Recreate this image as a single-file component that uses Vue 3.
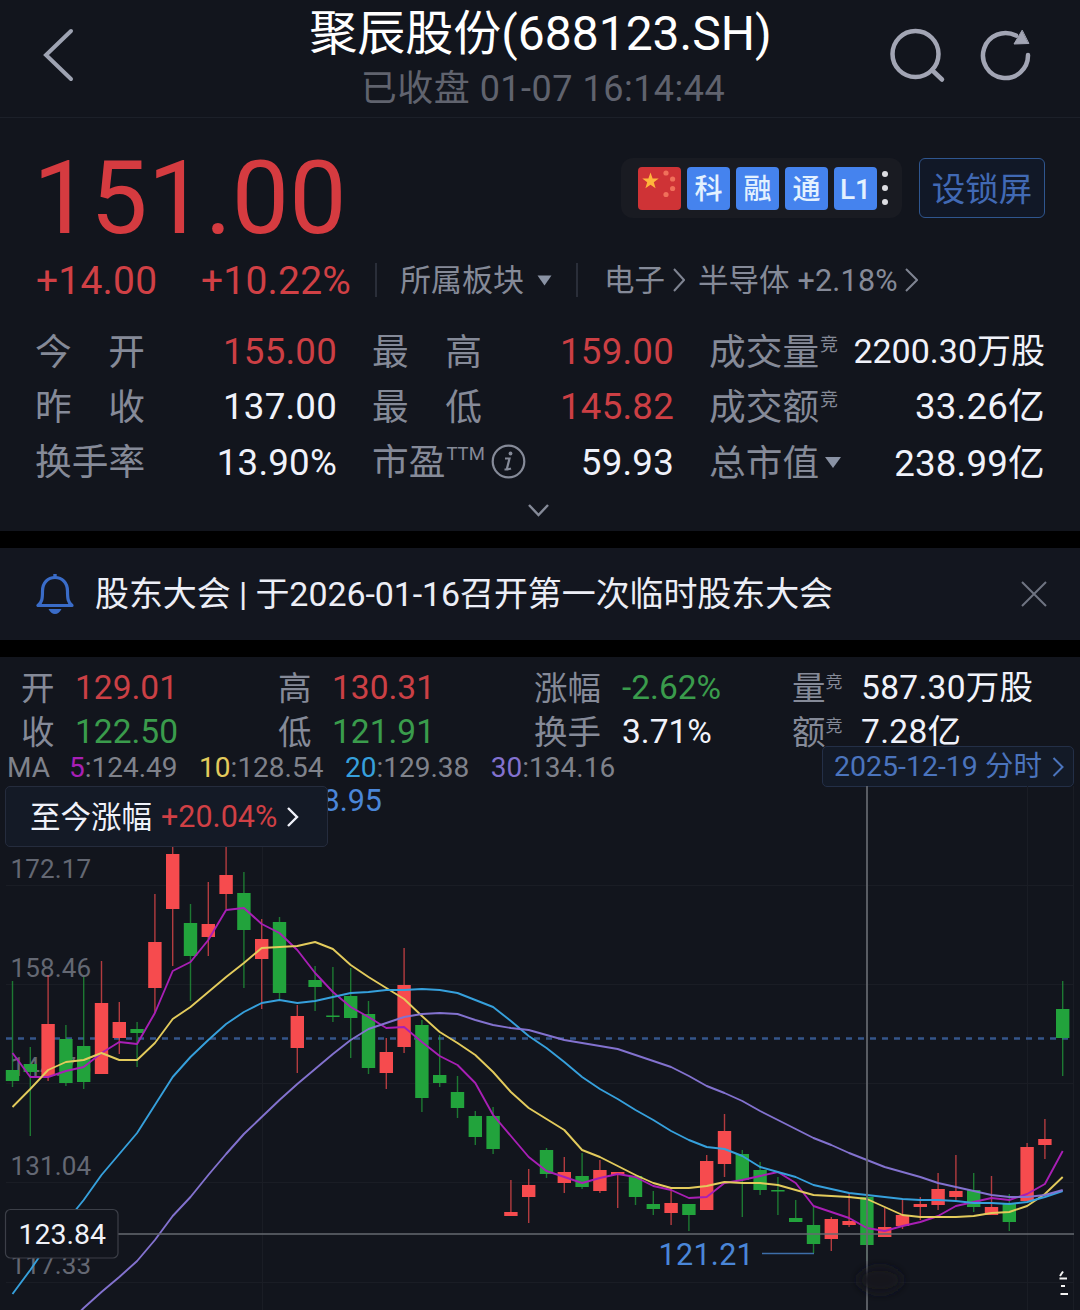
<template>
  <div class="stock">
    <header class="header">
      <svg class="header__back" viewBox="0 0 34 56">
        <path d="M30 4 L5 28 L30 52" />
      </svg>
      <div class="header__center">
        <h1 class="header__title">聚辰股份(688123.SH)</h1>
        <div class="header__status">已收盘 01-07 16:14:44</div>
      </div>
      <div class="header__actions">
        <svg width="56" height="56" viewBox="0 0 56 56">
          <circle cx="25.5" cy="26" r="23" />
          <path d="M42 42 L52 51.500" />
        </svg>
        <svg width="54" height="56" viewBox="0 0 54 56">
          <path d="M48 27 A22.5 22.5 0 1 1 36 7.600" />
          <path class="header__arrow" d="M42 2.500 L34 16 L48.500 15.500 Z" />
        </svg>
      </div>
    </header>

    <section class="quote">
      <div class="quote__top">
        <div class="quote__price">151.00</div>
        <div class="tags">
          <svg class="tags__flag" viewBox="0 0 43 43">
            <rect width="43" height="43" rx="4" fill="#cf3336" />
            <path d="M12.500 5.500 L14.600 11.400 L20.700 11.600 L15.800 15.300 L17.600 21.300 L12.500 17.700 L7.400 21.300 L9.200 15.300 L4.300 11.600 L10.400 11.400 Z" fill="#ffb53c" />
            <circle cx="28" cy="6" r="2.600" fill="#f0705a" />
            <circle cx="34.600" cy="12" r="2.600" fill="#f0705a" />
            <circle cx="34.600" cy="21.500" r="2.600" fill="#f0705a" />
            <circle cx="28" cy="27.500" r="2.600" fill="#f0705a" />
          </svg>
          <span v-for="tag in tags" :key="tag" class="tags__item">{{ tag }}</span>
          <span class="tags__more"><i></i><i></i><i></i></span>
        </div>
        <button class="lock-button" type="button">设锁屏</button>
      </div>

      <div class="quote__change">
        <span class="quote__diff red">+14.00</span>
        <span class="quote__percent red">+10.22%</span>
        <span class="divider"></span>
        <span class="quote__sector">所属板块</span>
        <svg class="triangle" width="15" height="11" viewBox="0 0 15 11"><path d="M0.500 0.500 H14.500 L7.500 10.500 Z" /></svg>
        <span class="divider divider--second"></span>
        <span>电子</span>
        <svg class="chevron chevron--first" width="12" height="24" viewBox="0 0 12 24"><path d="M1 1 L11 12 L1 23" /></svg>
        <span>半导体</span>
        <span class="quote__sector-change">+2.18%</span>
        <svg class="chevron chevron--last" width="13" height="24" viewBox="0 0 13 24"><path d="M1 1 L12 12 L1 23" /></svg>
      </div>

      <div class="metrics">
        <div v-for="item in metrics" :key="item.label" :class="['metrics__cell', { 'metrics__cell--low': item.menu }]">
          <span class="metrics__label">
            <span :class="['metrics__name', { spread: item.spread }]">
              <span v-for="(char, i) in item.label" :key="i">{{ char }}</span>
            </span>
            <sup v-if="item.sup" :class="{ ttm: item.sup === 'TTM' }">{{ item.sup }}</sup>
            <svg v-if="item.info" class="info" width="35" height="35" viewBox="0 0 35 35">
              <circle cx="17.500" cy="17.500" r="15.800" />
              <path d="M14 14.500 H18.500 L16 24.500 Q16 26 20 24.500 M13.500 25.500 H17" />
              <circle class="info__dot" cx="19.500" cy="9.500" r="1.900" />
            </svg>
            <svg v-if="item.menu" class="triangle metrics__menu" width="18" height="13" viewBox="0 0 18 13"><path d="M1 1 H17 L9 12 Z" /></svg>
          </span>
          <span :class="['metrics__value', item.tone, { narrow: item.narrow }]">{{ item.value }}</span>
        </div>
      </div>

      <svg class="quote__expand" width="23" height="14" viewBox="0 0 23 14"><path d="M2 2 L11.500 12 L21 2" /></svg>
    </section>

    <section class="notice">
      <svg class="notice__bell" width="38" height="42" viewBox="0 0 38 42">
        <path d="M2 32.500 H36 C32 29 31.500 26 31.500 18 C31.500 9.500 26 4.500 19 4.500 C12 4.500 6.500 9.500 6.500 18 C6.500 26 6 29 2 32.500 Z" />
        <path class="notice__solid" d="M17.300 1 H20.700 V5 H17.300 Z M12.500 36 H25.500 Q23 41 19 41 Q15 41 12.500 36 Z" />
      </svg>
      <span class="notice__text">股东大会 | 于2026-01-16召开第一次临时股东大会</span>
      <svg class="notice__close" width="26" height="28" viewBox="0 0 26 28"><path d="M1 2 L25 26 M25 2 L1 26" /></svg>
    </section>

    <section class="kline">
      <div class="kline__stats">
        <div v-for="item in dayStats" :key="item.label" class="kline__stat">
          <span :class="['kline__label', { wide: item.label.length > 1 }]">{{ item.label }}<sup v-if="item.sup">{{ item.sup }}</sup></span>
          <span :class="['kline__value', item.tone]">{{ item.value }}</span>
        </div>
      </div>

      <div class="ma">
        <span class="ma__name">MA</span>
        <span v-for="line in lines" :key="line.period" class="ma__item"><b :style="{ color: line.color }">{{ line.period }}</b>:{{ line.value }}</span>
        <div class="ma__date">
          <span>2025-12-19 分时</span>
          <svg width="12" height="20" viewBox="0 0 12 20"><path d="M1.500 1 L10.500 10 L1.500 19" /></svg>
        </div>
      </div>

      <div class="chart">
        <svg class="chart__svg" width="1080" height="524" viewBox="0 786 1080 524">
          <defs>
            <filter id="soften" x="-50%" y="-100%" width="200%" height="300%">
              <feGaussianBlur stdDeviation="5" />
            </filter>
          </defs>

          <g class="grid">
            <line v-for="y in gridRows" :key="y" x1="6" :y1="y" x2="1073" :y2="y" />
            <line v-for="x in [262.5, 1027.5, 1073.5]" :key="x" :x1="x" y1="786" :x2="x" y2="1310" />
          </g>

          <g class="axis">
            <text v-for="label in axis" :key="label.text" x="10.500" :y="label.y">{{ label.text }}</text>
          </g>

          <line class="last-price" x1="6" y1="1038.500" x2="1073" y2="1038.500" />

          <text class="mark" x="382" y="811" text-anchor="end">178.95</text>
          <text class="mark mark--low" x="658.500" y="1265">121.21</text>
          <path class="mark-line" d="M762 1253.500 H814" />

          <g v-for="(c, i) in candles" :key="i" :class="c[0] === 'r' ? 'candle-up' : 'candle-down'">
            <rect class="candle__wick" :x="candleX(i) - 0.7" :y="c[1]" width="1.4" :height="c[4] - c[1]" />
            <rect :x="candleX(i) - 6.7" :y="c[2]" width="13.4" :height="c[3] - c[2]" />
          </g>

          <polyline
            v-for="line in lines"
            :key="line.period"
            class="ma-line"
            :points="toPoints(line)"
            :stroke="line.color"
          />

          <path class="cross" d="M867 786 V1310 M118 1234 H1074" />

          <rect x="5.500" y="1209.500" width="112.500" height="48.500" rx="5" class="cross-label" />
          <text x="18.500" y="1244" class="cross-text">123.84</text>

          <ellipse class="smudge" cx="880" cy="1280" rx="22" ry="13" filter="url(#soften)" />
          <path class="edge-mark" d="M1060 1276 L1063 1271.500 M1059.500 1278.500 H1067 M1061 1286 H1065 M1060.500 1294 H1068" />
        </svg>

        <div class="chart__tip">
          <span class="chart__tip-name">至今涨幅</span>
          <span class="red chart__tip-value">+20.04%</span>
          <svg width="13" height="20" viewBox="0 0 13 20"><path d="M2 1 L11 10 L2 19" /></svg>
        </div>
      </div>
    </section>
  </div>
</template>

<script setup>
const tags = ['科', '融', '通', 'L1'];

const metrics = [
  { label: '今开', value: '155.00', tone: 'red', spread: true },
  { label: '最高', value: '159.00', tone: 'red', spread: true },
  { label: '成交量', value: '2200.30万股', sup: '竞', narrow: true },
  { label: '昨收', value: '137.00', spread: true },
  { label: '最低', value: '145.82', tone: 'red', spread: true },
  { label: '成交额', value: '33.26亿', sup: '竞' },
  { label: '换手率', value: '13.90%' },
  { label: '市盈', value: '59.93', sup: 'TTM', info: true },
  { label: '总市值', value: '238.99亿', menu: true },
];

const dayStats = [
  { label: '开', value: '129.01', tone: 'red' },
  { label: '高', value: '130.31', tone: 'red' },
  { label: '涨幅', value: '-2.62%', tone: 'green' },
  { label: '量', value: '587.30万股', sup: '竞' },
  { label: '收', value: '122.50', tone: 'green' },
  { label: '低', value: '121.91', tone: 'green' },
  { label: '换手', value: '3.71%' },
  { label: '额', value: '7.28亿', sup: '竞' },
];

const gridRows = [885.5, 984.5, 1083.5, 1182.5, 1282.5];

const axis = [
  { text: '172.17', y: 878 },
  { text: '158.46', y: 977 },
  { text: '144.75', y: 1076 },
  { text: '131.04', y: 1175 },
  { text: '117.33', y: 1274 },
];

// [direction, high, body top, body bottom, low] in chart coordinates
const candles = [
  ['g', 981, 1070, 1081, 1087], ['g', 1047, 1064, 1072, 1136], ['r', 975, 1024, 1076, 1081],
  ['g', 1025, 1039, 1083, 1086], ['g', 977, 1046, 1082, 1089], ['r', 961, 1003, 1074, 1074],
  ['r', 1002, 1022, 1038, 1054], ['g', 1022, 1029, 1033, 1067], ['r', 894, 942, 988, 1013],
  ['r', 840, 854, 909, 966], ['g', 904, 923, 956, 1001], ['r', 882, 924, 937, 956],
  ['r', 835, 875, 894, 909], ['g', 872, 893, 930, 988], ['r', 919, 939, 959, 1009],
  ['g', 917, 922, 993, 999], ['r', 1005, 1016, 1048, 1073], ['g', 966, 980, 987, 1011],
  ['g', 967, 1015.5, 1017, 1022], ['g', 968, 996, 1018, 1058], ['g', 1001, 1014, 1068, 1074],
  ['r', 1038, 1052, 1073, 1089], ['r', 948, 985, 1047, 1053], ['g', 1020, 1025, 1098, 1112],
  ['g', 1035, 1075, 1083, 1087], ['g', 1076, 1092, 1108, 1118], ['g', 1111, 1116, 1137, 1145],
  ['g', 1107, 1116, 1149, 1154], ['r', 1180, 1212, 1216, 1216], ['r', 1169, 1185, 1197, 1223],
  ['g', 1148, 1150, 1174, 1178], ['r', 1157, 1172, 1183, 1193], ['g', 1153, 1176, 1187, 1189],
  ['r', 1160, 1170, 1191, 1193], ['r', 1172, 1172, 1175, 1208], ['g', 1174, 1176, 1197, 1205],
  ['g', 1191, 1204, 1209, 1215], ['r', 1188, 1203, 1213, 1225], ['g', 1204, 1204, 1215, 1231],
  ['r', 1155, 1161, 1210, 1210], ['r', 1114, 1131, 1164, 1177], ['g', 1150, 1154, 1180, 1217],
  ['g', 1162, 1170, 1190, 1195], ['g', 1177, 1190, 1191.5, 1215], ['g', 1200, 1218, 1222, 1222],
  ['g', 1207, 1225, 1244, 1253], ['r', 1217, 1219, 1239, 1251], ['r', 1194, 1221, 1225, 1227],
  ['g', 1193, 1197, 1245, 1261], ['r', 1208, 1227, 1237, 1237], ['r', 1199, 1215, 1226, 1229],
  ['r', 1197, 1204, 1207, 1220], ['r', 1173, 1189, 1205, 1210], ['r', 1155, 1191, 1197, 1200],
  ['g', 1173, 1190, 1207, 1212], ['r', 1176, 1207, 1215, 1215], ['g', 1194, 1203, 1222, 1231],
  ['r', 1143, 1147, 1201, 1201], ['r', 1119, 1139, 1145, 1159], ['g', 981, 1009, 1038, 1076],
];

const lines = [
  {
    period: 5,
    value: '124.49',
    color: '#a81fb5',
    ys: [
      1053, 1077, 1077, 1071, 1067, 1053, 1042, 1044, 1013, 971, 962, 940, 910, 908, 924,
      933, 950, 973, 992, 1007, 1017, 1028, 1027, 1042, 1056, 1065, 1083, 1115, 1136, 1157,
      1171, 1177, 1183, 1178, 1174, 1177, 1186, 1190, 1198, 1197, 1183, 1180, 1176, 1172, 1183,
      1206, 1212, 1218, 1228, 1231, 1226, 1222, 1216, 1206, 1202, 1198, 1200, 1194, 1184, 1151,
    ],
  },
  {
    period: 10,
    value: '128.54',
    color: '#e3cb5c',
    ys: [
      1107, 1089, 1070, 1062, 1060, 1053, 1060, 1060, 1043, 1019, 1007, 992, 977, 963, 948,
      947, 946, 942, 949, 965, 977, 988, 999, 1016, 1032, 1043, 1055, 1072, 1092, 1108,
      1119, 1130, 1150, 1157, 1166, 1175, 1183, 1188, 1188, 1186, 1182, 1183, 1183, 1185, 1190,
      1195, 1196, 1197, 1199, 1207, 1215, 1217, 1217, 1217, 1216, 1213, 1212, 1206, 1194, 1177,
    ],
  },
  {
    period: 20,
    value: '129.38',
    color: '#36a0dc',
    ys: [
      1294, 1270, 1244, 1222, 1200, 1175, 1154, 1133, 1105, 1077, 1057, 1040, 1024, 1012, 1003,
      1000, 1003, 1001, 997, 993, 992, 990, 990, 989, 990, 993, 1000, 1007, 1021, 1036,
      1048, 1062, 1077, 1089, 1099, 1110, 1120, 1131, 1140, 1147, 1149, 1156, 1167, 1172, 1177,
      1185, 1189, 1193, 1195, 1197, 1199, 1200, 1200, 1201, 1203, 1203, 1204, 1202, 1197, 1191,
    ],
  },
  {
    period: 30,
    value: '134.16',
    color: '#8372cf',
    ys: [
      1380, 1362, 1344, 1326, 1308, 1292, 1277, 1261, 1240, 1216, 1197, 1175, 1154, 1134, 1117,
      1100, 1084, 1069, 1054, 1040, 1029, 1023, 1017, 1014, 1013, 1014, 1020, 1025, 1028, 1030,
      1035, 1040, 1043, 1046, 1049, 1055, 1061, 1067, 1076, 1086, 1093, 1101, 1111, 1120, 1129,
      1138, 1145, 1153, 1160, 1167, 1172, 1177, 1183, 1187, 1191, 1195, 1197, 1197, 1195, 1190,
    ],
  },
];

const candleX = (i) => 12.5 + i * 17.8;

const toPoints = (line) => line.ys.map((y, i) => `${candleX(i).toFixed(1)},${y}`).join(' ');
</script>

<style>
body {
  background: #000;
}
</style>

<style scoped>
.stock {
  width: 1080px;
  height: 1310px;
  overflow: hidden;
  background: #000;
  color: #858a98;
  font-family: Roboto, 'Noto Sans CJK SC', sans-serif;
  font-weight: 400;
}

svg {
  display: block;
  flex: none;
  fill: none;
}

.red {
  color: #d04045;
}

.green {
  color: #3a9c4c;
}

/* Header */
.header {
  display: grid;
  grid-template-columns: 270px 1fr 270px;
  height: 118px;
  box-sizing: border-box;
  border-bottom: 1px solid #1c2029;
  background: #12151d;
}

.header__back {
  width: 34px;
  height: 56px;
  margin: 27px 0 0 41px;
  stroke: #9ea3b2;
  stroke-width: 4;
  stroke-linecap: round;
}

.header__center {
  text-align: center;
  white-space: nowrap;
}

.header__title {
  margin: 6px 0 0 1px;
  font-size: 48px;
  line-height: 56px;
  font-weight: 400;
  color: #fff;
}

.header__status {
  margin: 6px 0 0 6px;
  font-size: 36px;
  line-height: 42px;
  letter-spacing: 0.5px;
  color: #60636e;
}

.header__actions {
  display: flex;
  gap: 35px;
  padding: 28px 0 0 80px;
  stroke: #a2a5b4;
  stroke-width: 4.5;
  stroke-linecap: round;
}

.header__actions svg:last-child {
  margin-left: -1px;
}

.header__arrow {
  fill: #a2a5b4;
  stroke-width: 1;
}

/* Quote */
.quote {
  height: 413px;
  box-sizing: border-box;
  padding: 40px 35px 0 36px;
  background: #12151d;
}

.quote__top {
  display: flex;
  align-items: flex-start;
  height: 78px;
}

.quote__price {
  width: 588px;
  margin-left: -3px;
  padding-top: 1px;
  box-sizing: border-box;
  font-size: 102px;
  line-height: 78px;
  color: #d53b40;
}

.tags {
  display: flex;
  align-items: center;
  gap: 6px;
  width: 281px;
  height: 60px;
  box-sizing: border-box;
  padding: 0 10px 0 17px;
  border-radius: 12px;
  background: #191b22;
}

.tags__flag {
  width: 43px;
  height: 43px;
}

.tags__item {
  width: 43px;
  height: 43px;
  border-radius: 4px;
  background: #4583ee;
  color: #e3f1ff;
  font-size: 28px;
  line-height: 45px;
  font-weight: 500;
  text-align: center;
}

.tags__more {
  display: flex;
  flex-direction: column;
  gap: 8px;
  margin-left: -1px;
}

.tags__more i {
  width: 6px;
  height: 6px;
  border-radius: 50%;
  background: #dcdde2;
}

.lock-button {
  width: 126px;
  height: 60px;
  margin-left: 17px;
  padding: 3px 0 0;
  border: 1.5px solid #2f568f;
  border-radius: 6px;
  background: #111827;
  color: #4169b4;
  font-family: inherit;
  font-size: 33.5px;
  line-height: 54px;
}

.quote__change {
  display: flex;
  align-items: center;
  height: 44px;
  margin-top: 22px;
  font-size: 30.5px;
  line-height: 44px;
  white-space: nowrap;
}

.quote__change span:not(.divider) {
  padding-top: 2px;
}

.quote__diff,
.quote__percent {
  width: 165px;
  font-size: 39px;
  letter-spacing: 0.2px;
}

.quote__percent {
  width: 174px;
}

.divider {
  width: 2px;
  height: 34px;
  margin-right: 23px;
  background: #2a2e39;
}

.divider--second {
  margin: 0 26px 0 24px;
}

.quote__sector {
  width: 137px;
  font-size: 31px;
}

.triangle {
  fill: #8a93a5;
}

.chevron {
  stroke: #7f8492;
  stroke-width: 2;
}

.chevron--first {
  margin: 0 13px 0 8px;
}

.chevron--last {
  margin-left: 7px;
}

.quote__sector-change {
  margin-left: 8px;
  letter-spacing: 0.2px;
}

.metrics {
  display: grid;
  grid-template-columns: 301px 301px 335px;
  grid-auto-rows: 55.300px;
  column-gap: 36px;
  margin-top: 21px;
}

.metrics__cell {
  display: flex;
  justify-content: space-between;
  align-items: center;
  font-size: 36.700px;
  line-height: 55px;
  white-space: nowrap;
}

.metrics__cell--low {
  padding-top: 2px;
}

.metrics__label {
  display: flex;
  align-items: center;
  margin-left: -1px;
}

.metrics__name {
  padding-top: 3px;
}

.spread {
  display: flex;
  justify-content: space-between;
  width: 110px;
}

.metrics__label sup {
  align-self: flex-start;
  margin: 13px 0 0 1px;
  font-size: 18px;
  line-height: 20px;
}

.metrics__label sup.ttm {
  margin-top: 12px;
  font-size: 18.500px;
}

.info {
  margin-left: 6px;
  stroke: #858a98;
  stroke-width: 2.2;
}

.info__dot {
  fill: #858a98;
  stroke: none;
}

.metrics__menu {
  margin-left: 5px;
}

.metrics__value {
  padding-top: 2px;
  color: #f0f2fa;
  letter-spacing: 0.2px;
}

.metrics__value.red {
  color: #cc3f44;
}

.metrics__value.narrow {
  font-size: 34px;
  letter-spacing: 0;
}

.quote__expand {
  margin: 14px 0 0 491px;
  stroke: #858a98;
  stroke-width: 2.4;
}

/* Notice */
.notice {
  display: flex;
  align-items: center;
  height: 92px;
  box-sizing: border-box;
  margin: 17px 0;
  padding: 0 33px 0 36px;
  background: #13161f;
}

.notice__bell {
  stroke: #3a6cc8;
  stroke-width: 3.2;
  stroke-linejoin: round;
}

.notice__solid {
  fill: #3a6cc8;
  stroke: none;
}

.notice__text {
  flex: 1;
  margin-left: 21px;
  font-size: 34px;
  line-height: 50px;
  letter-spacing: -0.1px;
  color: #eceef6;
  white-space: nowrap;
}

.notice__close {
  stroke: #6f7482;
  stroke-width: 2;
}

/* K line */
.kline {
  height: 653px;
  background: #12151d;
}

.kline__stats {
  display: grid;
  grid-template-columns: 257px 256px 258px 1fr;
  grid-auto-rows: 44px;
  padding: 9px 0 0 21px;
}

.kline__stat {
  display: flex;
  align-items: center;
  font-size: 33.500px;
  line-height: 44px;
  white-space: nowrap;
}

.kline__label {
  display: flex;
  width: 54px;
  padding-top: 1px;
}

.kline__label.wide {
  width: 88px;
}

.kline__label sup {
  margin-top: 5px;
  font-size: 17px;
  line-height: 20px;
}

.kline__stat:nth-child(4n) .kline__label {
  width: 69px;
}

.kline__value {
  color: #f0f2fa;
}

.kline__stat:nth-child(4n) .kline__value {
  letter-spacing: 0.3px;
}

.kline__value.red {
  color: #cb4045;
}

.kline__value.green {
  color: #3a9c4c;
}

.ma {
  display: flex;
  align-items: center;
  height: 41px;
  margin-top: -8px;
  padding: 0 6px 0 7px;
  font-size: 28px;
  line-height: 40px;
  color: #7f828b;
  white-space: nowrap;
}

.ma__name,
.ma__item {
  padding-top: 2px;
}

.ma__name {
  width: 62px;
}

.ma__item {
  margin-right: 21.500px;
}

.ma__item b {
  font-weight: 400;
}

.ma__date {
  display: flex;
  align-items: center;
  justify-content: space-between;
  width: 252px;
  height: 41px;
  box-sizing: border-box;
  margin-left: auto;
  padding: 0 9px 0 11px;
  border: 1px solid #232f47;
  border-radius: 5px;
  background: #131a27;
  color: #4b74bd;
  stroke-width: 2;
}

.ma__date span {
  padding-top: 1px;
  font-size: 28.500px;
}

.ma__date svg {
  stroke: #4b74bd;
}

.chart {
  position: relative;
  height: 524px;
  margin-top: -1px;
}

.grid {
  stroke: #1a1d25;
  stroke-width: 1;
}

.axis {
  fill: #646873;
  font-size: 26px;
  letter-spacing: 0.15px;
}

.last-price {
  stroke: #35558a;
  stroke-width: 2.5;
  stroke-dasharray: 6 6;
}

.mark {
  fill: #4a86d8;
  font-size: 30.500px;
}

.mark--low {
  letter-spacing: 0.3px;
}

.mark-line {
  stroke: #3d6ea9;
  stroke-width: 1.3;
}

.candle-up {
  fill: #f64b4e;
}

.candle-down {
  fill: #22a33c;
}

.candle__wick {
  opacity: 0.7;
}

.ma-line {
  stroke-width: 1.9;
  stroke-linejoin: round;
}

.cross {
  stroke: #666970;
  stroke-width: 1.7;
}

.cross-label {
  fill: #12151d;
  stroke: #3c3f48;
  stroke-width: 1.2;
}

.cross-text {
  fill: #f1f2f8;
  font-size: 28.500px;
}

.smudge {
  fill: #12151d;
}

.edge-mark {
  stroke: #f2f2f2;
  stroke-width: 2;
}

.chart__tip {
  position: absolute;
  top: 0;
  left: 5px;
  display: flex;
  align-items: center;
  width: 323px;
  height: 61px;
  box-sizing: border-box;
  padding-left: 24px;
  border: 1px solid #252c3d;
  border-radius: 5px;
  background: #141a26;
  color: #f0f2fa;
  font-size: 30.500px;
  line-height: 58px;
  white-space: nowrap;
}

.chart__tip-name {
  padding-top: 2px;
}

.chart__tip-value {
  margin: 0 9px;
}

.chart__tip svg {
  stroke: #f0f2fa;
  stroke-width: 2.4;
}
</style>
